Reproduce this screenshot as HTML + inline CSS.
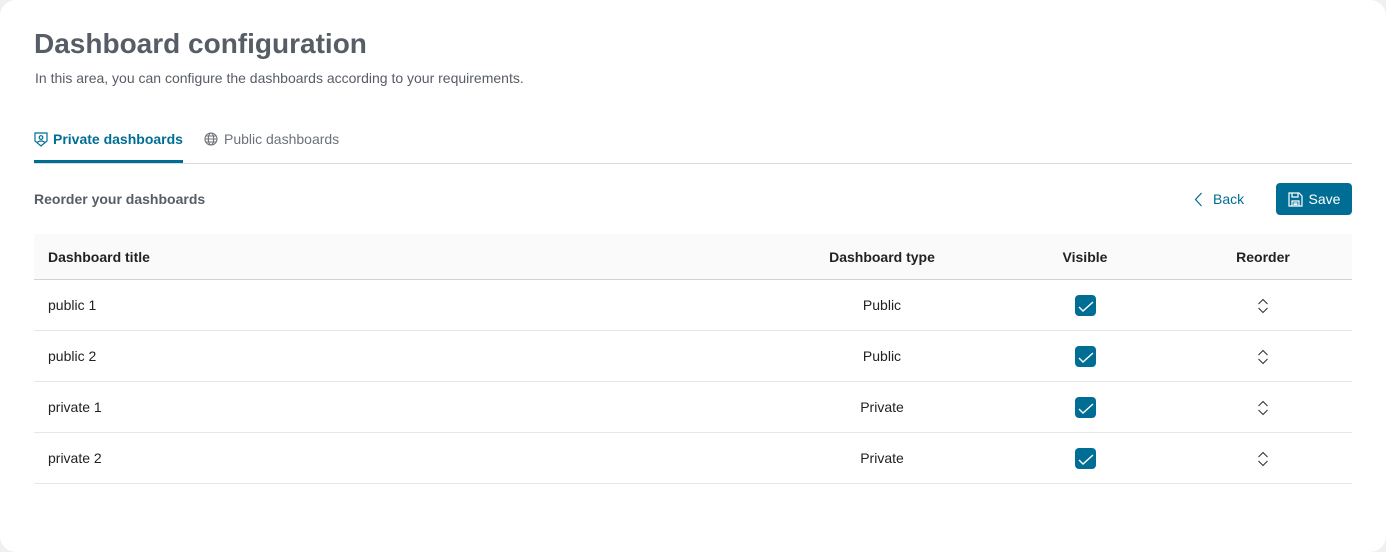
<!DOCTYPE html>
<html><head><style>
body{margin:0;background:#eef0f2;font-family:"Liberation Sans",sans-serif;}
.card{position:absolute;left:0;top:0;width:1386px;height:552px;background:#fff;border-radius:16px;}
h1{position:absolute;left:34px;top:28px;margin:0;font-size:28px;font-weight:bold;color:#575d66;}
.sub{position:absolute;left:35px;top:70px;font-size:14px;color:#575d66;}
.tabs{position:absolute;left:34px;top:118px;width:1318px;height:45px;border-bottom:1px solid #d9dcdf;}
.tab{position:absolute;top:13px;font-size:14px;display:flex;align-items:center;gap:5px;}
.t1{left:0;color:#006e94;font-weight:bold;}
.t2{left:170px;color:#6d7279;}
.ul{position:absolute;left:0;top:42px;width:149px;height:3px;background:#006e94;}
.ro{position:absolute;left:34px;top:191px;font-size:14px;font-weight:bold;color:#575d66;}
.back{position:absolute;left:1194px;top:191px;font-size:14px;color:#006e94;display:flex;align-items:center;gap:10px;}
.save{position:absolute;left:1276px;top:183px;width:76px;height:32px;background:#006e94;border-radius:4px;color:#fff;font-size:14px;display:flex;align-items:center;justify-content:center;gap:6px;}
table{position:absolute;left:34px;top:234px;width:1318px;border-collapse:collapse;table-layout:fixed;font-size:14px;color:#222;}
th,td{padding:0;}
th{height:45px;background:#fafafa;font-weight:bold;border-bottom:1px solid #cfd4d8;}
td{height:50px;border-bottom:1px solid #e4e6e8;}
.l{text-align:left;padding-left:14px;}
.c{text-align:center;}
.cb{display:inline-block;width:21px;height:21px;background:#006e94;border-radius:4px;vertical-align:middle;}
svg{display:inline-block;vertical-align:middle;}
</style></head><body>
<div class="card">
<h1>Dashboard configuration</h1>
<div class="sub">In this area, you can configure the dashboards according to your requirements.</div>
<div class="tabs">
<div class="tab t1"><svg width="14" height="15" viewBox="0 0 14 15" fill="none" stroke="#006e94" stroke-width="1.2"><path d="M1 1h12v8l-6 5-6-5z"/><circle cx="7" cy="5.5" r="1.8"/><path d="M3.5 10.5c1-2 6-2 7 0"/></svg>Private dashboards</div>
<div class="tab t2"><svg width="15" height="15" viewBox="0 0 15 15" fill="none" stroke="#6d7279" stroke-width="1.1"><circle cx="7" cy="7" r="6"/><ellipse cx="7" cy="7" rx="2.7" ry="6"/><path d="M1 7h12M2 4h10M2 10h10"/></svg>Public dashboards</div>
<div class="ul"></div>
</div>
<div class="ro">Reorder your dashboards</div>
<div class="back"><svg width="9" height="15" viewBox="0 0 9 15" fill="none" stroke="#006e94" stroke-width="1.2"><path d="M7.5 1L1.5 7.5l6 6.5"/></svg>Back</div>
<div class="save"><svg width="15" height="15" viewBox="0 0 15 15" fill="none" stroke="#fff" stroke-width="1.2"><path d="M1 1h10l3 3v10H1z"/><path d="M4 1v4h6V1M4 14V9h7v5M5.5 11h4M5.5 12.5h4"/></svg>Save</div>
<table>
<colgroup><col style="width:734px"><col style="width:228px"><col style="width:178px"><col style="width:178px"></colgroup>
<tr><th class="l">Dashboard title</th><th class="c">Dashboard type</th><th class="c">Visible</th><th class="c">Reorder</th></tr>
<tr><td class="l">public 1</td><td class="c">Public</td><td class="c"><span class="cb"><svg width="21" height="21" viewBox="0 0 21 21" fill="none" stroke="#fff" stroke-width="1.4"><path d="M4 12l4 4 10-9"/></svg></span></td><td class="c"><svg width="12" height="16" viewBox="0 0 12 16" fill="none" stroke="#333" stroke-width="1.1"><path d="M1.5 6L6 1.5 10.5 6M1.5 10L6 14.5 10.5 10"/></svg></td></tr>
<tr><td class="l">public 2</td><td class="c">Public</td><td class="c"><span class="cb"><svg width="21" height="21" viewBox="0 0 21 21" fill="none" stroke="#fff" stroke-width="1.4"><path d="M4 12l4 4 10-9"/></svg></span></td><td class="c"><svg width="12" height="16" viewBox="0 0 12 16" fill="none" stroke="#333" stroke-width="1.1"><path d="M1.5 6L6 1.5 10.5 6M1.5 10L6 14.5 10.5 10"/></svg></td></tr>
<tr><td class="l">private 1</td><td class="c">Private</td><td class="c"><span class="cb"><svg width="21" height="21" viewBox="0 0 21 21" fill="none" stroke="#fff" stroke-width="1.4"><path d="M4 12l4 4 10-9"/></svg></span></td><td class="c"><svg width="12" height="16" viewBox="0 0 12 16" fill="none" stroke="#333" stroke-width="1.1"><path d="M1.5 6L6 1.5 10.5 6M1.5 10L6 14.5 10.5 10"/></svg></td></tr>
<tr><td class="l">private 2</td><td class="c">Private</td><td class="c"><span class="cb"><svg width="21" height="21" viewBox="0 0 21 21" fill="none" stroke="#fff" stroke-width="1.4"><path d="M4 12l4 4 10-9"/></svg></span></td><td class="c"><svg width="12" height="16" viewBox="0 0 12 16" fill="none" stroke="#333" stroke-width="1.1"><path d="M1.5 6L6 1.5 10.5 6M1.5 10L6 14.5 10.5 10"/></svg></td></tr>
</table>
</div>
</body></html>
